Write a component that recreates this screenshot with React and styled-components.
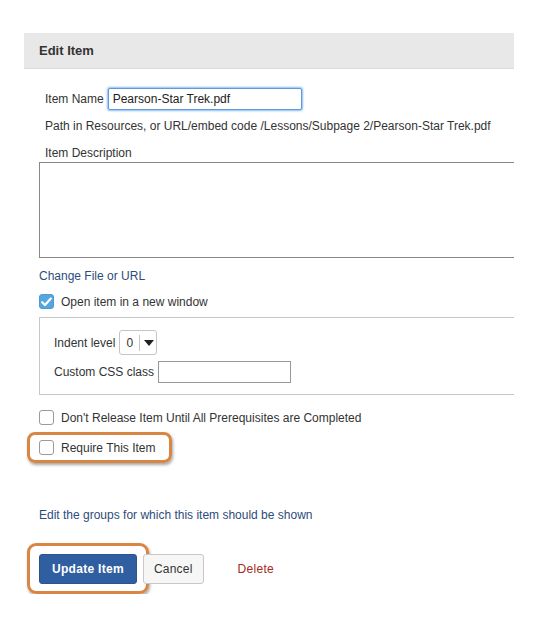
import React from 'react';
import styled, { createGlobalStyle } from 'styled-components';

const GlobalStyle = createGlobalStyle`
  body {
    margin: 0;
    background: #fff;
    font-family: "Liberation Sans", Arial, sans-serif;
    color: #333;
  }
`;

const Page = styled.div`
  padding: 33px 0 0 24px;
  width: 490px;
  overflow: hidden;
`;

const Header = styled.div`
  height: 36px;
  background: #e8e8e8;
  border-bottom: 1px solid #dcdcdc;
  box-sizing: border-box;
  display: flex;
  align-items: center;
  padding-left: 15px;
  font-size: 13px;
  font-weight: bold;
  color: #333;
`;

const Body = styled.div`
  padding-left: 15px;
  font-size: 12px;
`;

const Row = styled.div`
  display: flex;
  align-items: center;
  gap: ${p => p.gap || 4}px;
  padding-left: ${p => p.indent || 0}px;
  margin-top: ${p => p.top || 0}px;
  height: ${p => p.h || 'auto'};
`;

const TextInput = styled.input`
  box-sizing: border-box;
  width: ${p => p.w}px;
  height: ${p => p.h}px;
  border: 1px solid ${p => (p.focus ? '#5b9be0' : '#999')};
  box-shadow: ${p => (p.focus ? '0 0 2px 1px #8dbcef' : 'none')};
  border-radius: ${p => (p.focus ? 2 : 0)}px;
  font-family: inherit;
  font-size: 12px;
  padding: 0 4px;
  color: #222;
  outline: none;
`;

const Text = styled.div`
  margin-top: ${p => p.top || 0}px;
  padding-left: ${p => p.indent || 0}px;
  line-height: 14px;
`;

const TextArea = styled.div`
  margin-top: 2px;
  width: 520px;
  height: 96px;
  box-sizing: border-box;
  border: 1px solid #888;
`;

const Link = styled.a`
  display: block;
  color: #2e4c7c;
  text-decoration: none;
  font-size: 12px;
  margin-top: ${p => p.top || 0}px;
  line-height: 14px;
`;

const Box = styled.span`
  width: 15px;
  height: 15px;
  box-sizing: border-box;
  border-radius: 3px;
  border: 1px solid ${p => (p.checked ? '#4a9bd6' : '#9a9a9a')};
  background: ${p => (p.checked ? '#55a6de' : '#fff')};
  display: inline-flex;
  align-items: center;
  justify-content: center;
  flex-shrink: 0;
`;

const Fieldset = styled.div`
  margin-top: 8px;
  width: 520px;
  height: 78px;
  box-sizing: border-box;
  border: 1px solid #c8c8c8;
  padding: 12px 0 0 14px;
`;

const SelectBox = styled.div`
  box-sizing: border-box;
  height: 25px;
  width: 38px;
  border: 1px solid #c4c4c4;
  border-radius: 3px;
  display: flex;
  align-items: center;
  font-size: 12px;
`;

const SelectValue = styled.span`
  padding: 0 6px 0 6px;
  border-right: 1px solid #c4c4c4;
  line-height: 16px;
`;

const Caret = styled.span`
  margin-left: 4px;
  width: 0;
  height: 0;
  border-left: 5px solid transparent;
  border-right: 5px solid transparent;
  border-top: 6px solid #222;
`;

const Highlight = styled.div`
  margin: 7px 0 0 -12px;
  width: 145px;
  height: 31px;
  box-sizing: border-box;
  border: 3px solid #d88644;
  border-radius: 8px;
  box-shadow: 1px 2px 3px rgba(0, 0, 0, 0.35);
  display: flex;
  align-items: center;
  gap: 7px;
  padding-left: 9px;
`;

const Buttons = styled.div`
  display: flex;
  align-items: center;
  margin: 21px 0 0 -12px;
`;

const ButtonFrame = styled.div`
  box-sizing: border-box;
  width: 122px;
  height: 51px;
  border: 3px solid #d88644;
  border-radius: 9px;
  box-shadow: 1px 2px 3px rgba(0, 0, 0, 0.35);
  display: flex;
  align-items: center;
  justify-content: center;
`;

const Button = styled.button`
  box-sizing: border-box;
  height: 30px;
  padding: 0 ${p => (p.primary ? 12 : 10)}px;
  margin-left: ${p => p.shift || 0}px;
  border-radius: 3px;
  font-family: inherit;
  font-size: 12px;
  font-weight: ${p => (p.primary ? 'bold' : 'normal')};
  color: ${p => (p.primary ? '#fff' : '#333')};
  background: ${p => (p.primary ? '#2f5fa1' : '#f6f6f6')};
  border: 1px solid ${p => (p.primary ? '#2a5590' : '#c8c8c8')};
  letter-spacing: ${p => (p.primary ? '0.3px' : '0.2px')};
`;

const DeleteLink = styled.a`
  color: #a52a22;
  font-size: 12px;
  margin-left: 34px;
  letter-spacing: 0.3px;
`;

const Check = ({ checked }) => (
  <Box checked={checked}>
    {checked && (
      <svg width="11" height="10" viewBox="0 0 11 10">
        <path d="M1.2 5.2 L4 8 L9.8 1.6" fill="none" stroke="#fff" strokeWidth="2.2" strokeLinecap="round" strokeLinejoin="round" />
      </svg>
    )}
  </Box>
);

export default function App() {
  return (
    <>
      <GlobalStyle />
      <Page>
        <Header>Edit Item</Header>
        <Body>
          <Row indent={6} top={19}>
            <span>Item Name</span>
            <TextInput w={194} h={22} focus defaultValue="Pearson-Star Trek.pdf" />
          </Row>
          <Text indent={6} top={9}>Path in Resources, or URL/embed code /Lessons/Subpage 2/Pearson-Star Trek.pdf</Text>
          <Text indent={6} top={13}>Item Description</Text>
          <TextArea />
          <Link top={11}>Change File or URL</Link>
          <Row top={11} gap={7}>
            <Check checked />
            <span>Open item in a new window</span>
          </Row>
          <Fieldset>
            <Row>
              <span>Indent level</span>
              <SelectBox>
                <SelectValue>0</SelectValue>
                <Caret />
              </SelectBox>
            </Row>
            <Row top={6}>
              <span>Custom CSS class</span>
              <TextInput w={133} h={22} />
            </Row>
          </Fieldset>
          <Row top={15} gap={7}>
            <Check />
            <span>Don't Release Item Until All Prerequisites are Completed</span>
          </Row>
          <Highlight>
            <Check />
            <span>Require This Item</span>
          </Highlight>
          <Link top={45}>Edit the groups for which this item should be shown</Link>
          <Buttons>
            <ButtonFrame>
              <Button primary>Update Item</Button>
            </ButtonFrame>
            <Button shift={-6}>Cancel</Button>
            <DeleteLink>Delete</DeleteLink>
          </Buttons>
        </Body>
      </Page>
    </>
  );
}
